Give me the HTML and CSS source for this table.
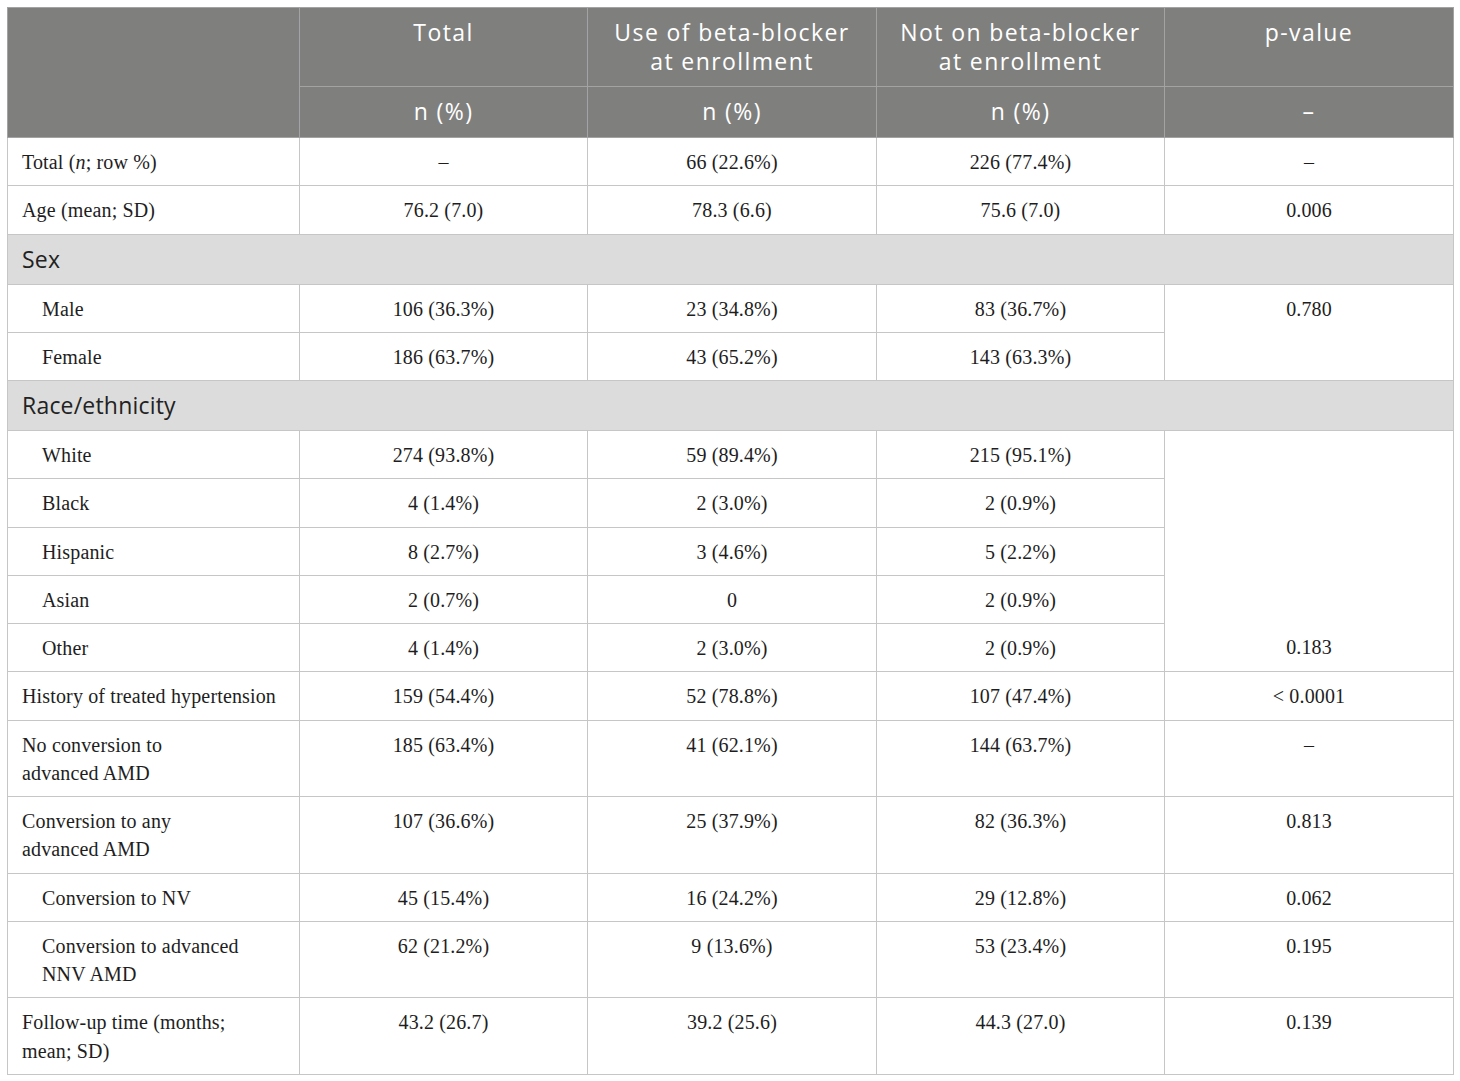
FILE: index.html
```html
<!DOCTYPE html>
<html>
<head>
<meta charset="utf-8">
<link rel="stylesheet" href="styles.css">
</head>
<body>
<table class="tbl">
  <colgroup>
    <col class="c1"><col class="c2"><col class="c3"><col class="c4"><col class="c5">
  </colgroup>
  <thead>
    <tr>
      <th rowspan="2"></th>
      <th>Total</th>
      <th>Use of beta-blocker<br>at enrollment</th>
      <th>Not on beta-blocker<br>at enrollment</th>
      <th>p-value</th>
    </tr>
    <tr class="sub">
      <th>n (%)</th>
      <th>n (%)</th>
      <th>n (%)</th>
      <th>–</th>
    </tr>
  </thead>
  <tbody>
    <tr><td class="lbl">Total (<i>n</i>; row %)</td><td>–</td><td>66 (22.6%)</td><td>226 (77.4%)</td><td>–</td></tr>
    <tr><td class="lbl">Age (mean; SD)</td><td>76.2 (7.0)</td><td>78.3 (6.6)</td><td>75.6 (7.0)</td><td>0.006</td></tr>
    <tr class="sec"><td colspan="5">Sex</td></tr>
    <tr><td class="lbl ind">Male</td><td>106 (36.3%)</td><td>23 (34.8%)</td><td>83 (36.7%)</td><td rowspan="2">0.780</td></tr>
    <tr><td class="lbl ind">Female</td><td>186 (63.7%)</td><td>43 (65.2%)</td><td>143 (63.3%)</td></tr>
    <tr class="sec"><td colspan="5">Race/ethnicity</td></tr>
    <tr><td class="lbl ind">White</td><td>274 (93.8%)</td><td>59 (89.4%)</td><td>215 (95.1%)</td><td rowspan="5" class="bot">0.183</td></tr>
    <tr><td class="lbl ind">Black</td><td>4 (1.4%)</td><td>2 (3.0%)</td><td>2 (0.9%)</td></tr>
    <tr><td class="lbl ind">Hispanic</td><td>8 (2.7%)</td><td>3 (4.6%)</td><td>5 (2.2%)</td></tr>
    <tr><td class="lbl ind">Asian</td><td>2 (0.7%)</td><td>0</td><td>2 (0.9%)</td></tr>
    <tr><td class="lbl ind">Other</td><td>4 (1.4%)</td><td>2 (3.0%)</td><td>2 (0.9%)</td></tr>
    <tr><td class="lbl">History of treated hypertension</td><td>159 (54.4%)</td><td>52 (78.8%)</td><td>107 (47.4%)</td><td>&lt; 0.0001</td></tr>
    <tr><td class="lbl">No conversion to<br>advanced AMD</td><td>185 (63.4%)</td><td>41 (62.1%)</td><td>144 (63.7%)</td><td>–</td></tr>
    <tr><td class="lbl">Conversion to any<br>advanced AMD</td><td>107 (36.6%)</td><td>25 (37.9%)</td><td>82 (36.3%)</td><td>0.813</td></tr>
    <tr><td class="lbl ind">Conversion to NV</td><td>45 (15.4%)</td><td>16 (24.2%)</td><td>29 (12.8%)</td><td>0.062</td></tr>
    <tr><td class="lbl ind">Conversion to advanced<br>NNV AMD</td><td>62 (21.2%)</td><td>9 (13.6%)</td><td>53 (23.4%)</td><td>0.195</td></tr>
    <tr><td class="lbl">Follow-up time (months;<br>mean; SD)</td><td>43.2 (26.7)</td><td>39.2 (25.6)</td><td>44.3 (27.0)</td><td>0.139</td></tr>
  </tbody>
</table>
</body>
</html>
```
FILE: styles.css
```css
html, body {
  margin: 0;
  padding: 0;
  background: #ffffff;
}
body {
  padding: 7px 0 0 7px;
}
.tbl {
  border-collapse: collapse;
  table-layout: fixed;
  width: 1446px;
  font-family: "Liberation Serif", "Times New Roman", serif;
  color: #1e1e1e;
}
.c1 { width: 292px; }
.c2 { width: 288px; }
.c3 { width: 289px; }
.c4 { width: 288px; }
.c5 { width: 289px; }

.tbl th {
  background: #7f807e;
  color: #ffffff;
  font-family: "Open Sans", "Noto Sans", sans-serif;
  font-weight: 400;
  font-size: 23px;
  letter-spacing: 1.4px;
  line-height: 29px;
  padding: 10px 6px 10px;
  text-align: center;
  vertical-align: top;
  border: 1px solid #a3a3a3;
}
.tbl tr.sub th {
  padding: 10px 6px 11px;
}
.tbl td {
  font-size: 20px;
  letter-spacing: 0.15px;
  line-height: 28.25px;
  padding: 10px 8px 9px;
  text-align: center;
  vertical-align: top;
  border: 1px solid #c6c6c6;
}
.tbl td.lbl {
  text-align: left;
  padding-left: 14px;
}
.tbl td.ind {
  padding-left: 34px;
}
.tbl td.bot {
  vertical-align: bottom;
  padding-bottom: 10px;
}
.tbl tr.sec td {
  background: #dcdcdc;
  font-family: "Open Sans", "Noto Sans", sans-serif;
  font-size: 23px;
  letter-spacing: 0.2px;
  line-height: 29px;
  padding: 10px 14px 10px;
  text-align: left;
  color: #222222;
}
```
